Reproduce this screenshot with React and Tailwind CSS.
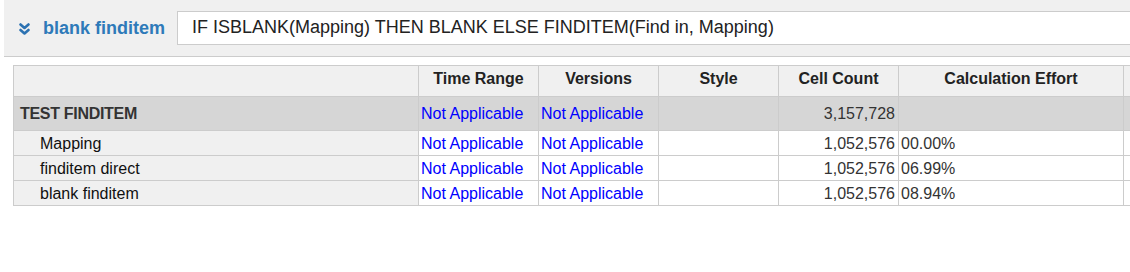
import React from 'react';

const rows = [
  { name: 'Mapping', count: '1,052,576', effort: '00.00%' },
  { name: 'finditem direct', count: '1,052,576', effort: '06.99%' },
  { name: 'blank finditem', count: '1,052,576', effort: '08.94%' },
];

const cell = 'border border-[#cccccc] p-0';
const dcell = 'border border-[#cccccc] p-0 pt-[2px] leading-[22px]';

const App = () => {
  return (
    <div className="w-[1130px] h-[272px] bg-white overflow-hidden font-['Liberation_Sans',Arial,sans-serif] text-[16px]">
      {/* Formula bar */}
      <div className="ml-[4px] h-[57px] bg-[#f0f0f0] border-b border-[#cccccc] flex items-center overflow-hidden">
        <svg className="ml-[15px] mt-[1px] w-[11px] h-[12px] shrink-0" viewBox="0 0 11 12" fill="none">
          <path d="M1.5 1.5 L5.5 5 L9.5 1.5" stroke="#2c72b2" strokeWidth="2.6" strokeLinecap="round" strokeLinejoin="round" />
          <path d="M1.5 7 L5.5 10.5 L9.5 7" stroke="#2c72b2" strokeWidth="2.6" strokeLinecap="round" strokeLinejoin="round" />
        </svg>
        <span className="ml-[13px] text-[18px] font-bold text-[#2e7ab9] whitespace-nowrap">blank finditem</span>
        <div className="ml-[12px] w-[980px] shrink-0 h-[34px] mb-[1px] bg-white border border-[#cccccc] flex items-center pl-[14px] text-[18px] text-[#222222] whitespace-nowrap">
          IF ISBLANK(Mapping) THEN BLANK ELSE FINDITEM(Find in, Mapping)
        </div>
      </div>

      {/* Table */}
      <div className="mt-[8px] ml-[13px] overflow-hidden">
        <table className="table-fixed border-collapse w-[1150px] text-[#222222]">
          <colgroup>
            <col className="w-[405px]" />
            <col className="w-[120px]" />
            <col className="w-[120px]" />
            <col className="w-[120px]" />
            <col className="w-[120px]" />
            <col className="w-[225px]" />
            <col />
          </colgroup>
          <thead>
            <tr className="h-[31px] bg-[#f0f0f0] font-bold">
              <th className={`${cell} pb-[4px]`}></th>
              <th className={`${cell} pb-[4px]`}>Time Range</th>
              <th className={`${cell} pb-[4px]`}>Versions</th>
              <th className={`${cell} pb-[4px]`}>Style</th>
              <th className={`${cell} pb-[4px]`}>Cell Count</th>
              <th className={`${cell} pb-[4px]`}>Calculation Effort</th>
              <th className={`${cell} pb-[4px]`}></th>
            </tr>
          </thead>
          <tbody>
            <tr className="h-[34px] bg-[#d6d6d6]">
              <td className={`${cell} pl-[6px] font-bold text-[#333333] tracking-[-0.3px]`}>TEST FINDITEM</td>
              <td className={`${cell} pl-[2px] text-[#0000ff]`}>Not Applicable</td>
              <td className={`${cell} pl-[2px] text-[#0000ff]`}>Not Applicable</td>
              <td className={cell}></td>
              <td className={`${cell} pr-[3px] text-right text-[#333333]`}>3,157,728</td>
              <td className={cell}></td>
              <td className={cell}></td>
            </tr>
            {rows.map((r) => (
              <tr key={r.name} className="h-[25px] bg-white">
                <td className={`${dcell} pl-[26px] bg-[#f0f0f0] text-[#111111]`}>{r.name}</td>
                <td className={`${dcell} pl-[2px] text-[#0000ff]`}>Not Applicable</td>
                <td className={`${dcell} pl-[2px] text-[#0000ff]`}>Not Applicable</td>
                <td className={dcell}></td>
                <td className={`${dcell} pr-[3px] text-right text-[#333333]`}>{r.count}</td>
                <td className={`${dcell} pl-[2px] text-[#333333]`}>{r.effort}</td>
                <td className={dcell}></td>
              </tr>
            ))}
          </tbody>
        </table>
      </div>
    </div>
  );
};

export default App;
